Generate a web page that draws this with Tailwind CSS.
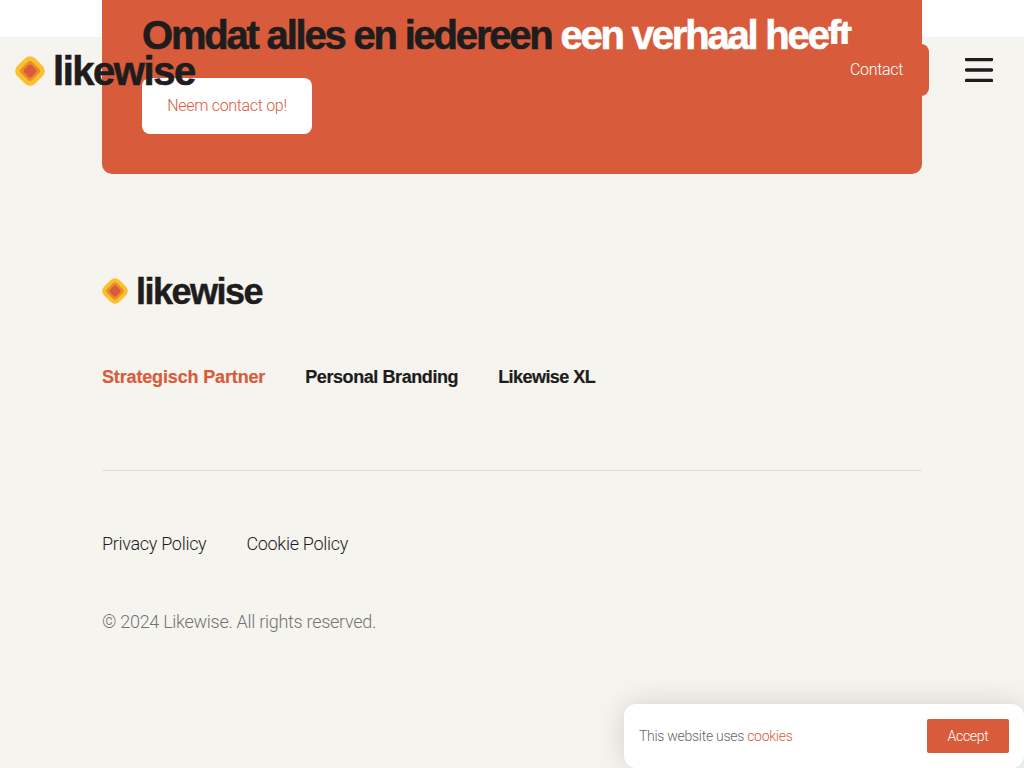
<!DOCTYPE html>
<html><head><meta charset="utf-8"><script src="https://cdn.jsdelivr.net/npm/@tailwindcss/browser@4"></script></head>
<body class="relative w-[1024px] h-[768px] overflow-hidden bg-[#f5f4ef] font-['Roboto',sans-serif] text-[#1e1c1c]">
<div class="h-[37px] bg-white"></div>
<section class="absolute left-[102px] top-0 w-[820px] h-[174px] bg-[#d85c3c] rounded-b-[10px] px-[40px] pt-[12px]">
  <h2 class="font-['Liberation_Sans',sans-serif] text-[40px] leading-[46px] font-bold tracking-[-2.2px] [-webkit-text-stroke:0.6px_currentColor] whitespace-nowrap">Omdat alles en iedereen <span class="text-white">een verhaal heeft</span></h2>
  <a class="mt-[20px] w-[170px] h-[56px] flex items-center justify-center bg-white rounded-[8px] text-[#d85c3c] text-[16px] font-light tracking-[-0.02em] pb-[1px]">Neem contact op!</a>
</section>
<header class="absolute z-20 left-0 top-[37px] w-full h-[66px] flex items-center justify-between pl-[15px] pr-[31px]">
  <div class="flex items-center gap-[8px]">
    <svg width="30" height="30" viewBox="0 0 30 30" class="mt-[1px]"><rect x="2.500" y="2.500" width="25" height="25" rx="7" transform="rotate(45 15 15)" fill="#fcbf2d"/><rect x="7" y="7" width="16" height="16" rx="3.500" transform="rotate(45 15 15)" fill="#e98d2c"/><rect x="9.750" y="9.750" width="10.500" height="10.500" rx="2.500" transform="rotate(45 15 15)" fill="#d85c3c"/></svg>
    <span class="font-['Liberation_Sans',sans-serif] text-[40px] font-bold tracking-[-1.47px] [-webkit-text-stroke:0.6px_currentColor] leading-none mt-[2px]">likewise</span>
  </div>
  <div class="flex items-center gap-[36px]">
    <a class="h-[52px] w-[105px] flex items-center justify-center bg-[#d85c3c] rounded-[8px] text-white text-[16px] font-light tracking-[-0.3px] pb-[1px]">Contact</a>
    <svg width="28" height="24" viewBox="0 0 28 24"><path d="M1.500 1.500H26.500M1.500 12H26.500M1.500 22.500H26.500" stroke="#1e1c1c" stroke-width="3.500" stroke-linecap="round"/></svg>
  </div>
</header>
<footer class="absolute left-[102px] top-[274px] w-[820px]">
  <div class="flex items-center gap-[8px] h-[34px]">
    <svg width="26" height="26" viewBox="0 0 30 30"><rect x="2.500" y="2.500" width="25" height="25" rx="7" transform="rotate(45 15 15)" fill="#fcbf2d"/><rect x="7" y="7" width="16" height="16" rx="3.500" transform="rotate(45 15 15)" fill="#e98d2c"/><rect x="9.750" y="9.750" width="10.500" height="10.500" rx="2.500" transform="rotate(45 15 15)" fill="#d85c3c"/></svg>
    <span class="font-['Liberation_Sans',sans-serif] text-[36px] font-bold tracking-[-1.5px] [-webkit-text-stroke:0.5px_currentColor] leading-none mt-[2px]">likewise</span>
  </div>
  <nav class="mt-[57px] flex gap-[40px] font-['Liberation_Sans',sans-serif] text-[18px] font-bold leading-[24px] [-webkit-text-stroke:0.2px_currentColor]"><span class="text-[#d85c3c] tracking-[-0.15px]">Strategisch Partner</span><span class="tracking-[-0.42px]">Personal Branding</span><span class="tracking-[-0.55px]">Likewise XL</span></nav>
  <div class="mt-[81px] border-t border-[#dddcd8]"></div>
  <nav class="mt-[61px] flex gap-[40px] text-[18px] font-light tracking-[-0.3px] leading-[24px]"><span>Privacy Policy</span><span>Cookie Policy</span></nav>
  <p class="mt-[54px] text-[18px] font-light tracking-[-0.28px] leading-[24px] text-[#737373]">© 2024 Likewise. All rights reserved.</p>
</footer>
<div class="absolute right-0 bottom-0 w-[400px] h-[64px] bg-white rounded-[12px] shadow-[0_0_30px_rgba(0,0,0,0.15)] flex items-center justify-between pl-[15px] pr-[15px] text-[14px] font-light tracking-[-0.02em] text-[#666]">
  <span>This website uses <span class="text-[#d85c3c]">cookies</span></span>
  <a class="w-[82px] h-[34px] flex items-center justify-center bg-[#d85c3c] rounded-[2px] text-white">Accept</a>
</div>
</body></html>
